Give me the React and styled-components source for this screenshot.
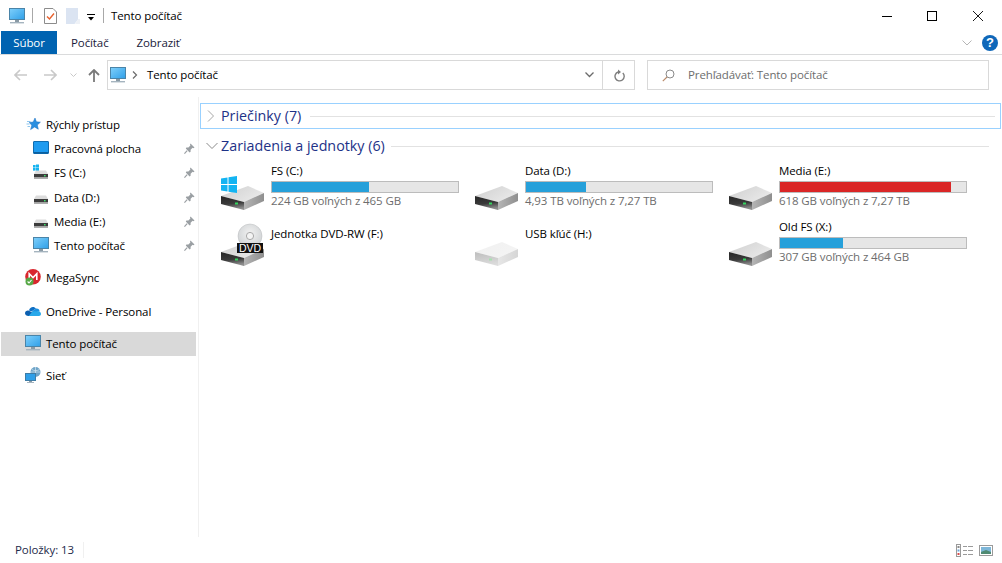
import styled, { createGlobalStyle } from "styled-components";

const GlobalStyle = createGlobalStyle`
  html, body, #root {
    margin: 0;
    height: 100%;
    background: #fff;
  }
  body {
    font-family: "Open Sans", "Noto Sans", sans-serif;
    font-size: 11.5px;
    letter-spacing: -0.1px;
    color: #000;
    overflow: hidden;
  }
`;

const quickAccess = [
  { label: "Pracovná plocha", icon: "desktop" },
  { label: "FS (C:)", icon: "sysdrive" },
  { label: "Data (D:)", icon: "drive", gap: 1 },
  { label: "Media (E:)", icon: "drive" },
  { label: "Tento počítač", icon: "pc" },
];

const drives = [
  { name: "FS (C:)", used: 52, info: "224 GB voľných z 465 GB", badge: "win" },
  { name: "Data (D:)", used: 32, info: "4,93 TB voľných z 7,27 TB" },
  { name: "Media (E:)", used: 92, info: "618 GB voľných z 7,27 TB", full: true },
  { name: "Jednotka DVD-RW (F:)", badge: "dvd" },
  { name: "USB kľúč (H:)", pale: true },
  { name: "Old FS (X:)", used: 34, info: "307 GB voľných z 464 GB" },
];

function PcIcon({ size = 16 }) {
  return (
    <svg width={size} height={size} viewBox="0 0 16 16">
      <defs>
        <linearGradient id="pcScreen" x1="0" y1="0" x2="1" y2="1">
          <stop offset="0" stopColor="#7fd0fb" />
          <stop offset="1" stopColor="#2f9fe8" />
        </linearGradient>
      </defs>
      <rect x="0.5" y="0.5" width="15" height="11" fill="url(#pcScreen)" stroke="#4a84a8" />
      <rect x="6" y="12" width="4" height="2" fill="#8a9aa5" />
      <rect x="1" y="14" width="14" height="1.4" fill="#a5b4bf" />
    </svg>
  );
}

function DesktopIcon() {
  return (
    <svg width="16" height="16" viewBox="0 0 16 16">
      <rect x="0.5" y="1.5" width="15" height="12" rx="0.5" fill="#1e9bf0" stroke="#0f6cb0" />
      <rect x="1" y="12" width="14" height="1.5" fill="#0b5f9e" />
    </svg>
  );
}

function SmallDrive({ windows }) {
  return (
    <svg width="16" height="16" viewBox="0 0 16 16">
      {windows && (
        <g fill="#17b4f0">
          <rect x="0" y="1" width="2.6" height="2.6" />
          <rect x="3" y="0.5" width="3" height="3.1" />
          <rect x="0" y="4" width="2.6" height="2.6" />
          <rect x="3" y="4" width="3" height="3" />
        </g>
      )}
      <path d="M1 10 L3 6.5 H13 L15 10 Z" fill="#dcdcdc" />
      <rect x="1" y="10" width="14" height="3.4" fill="#3c3c3c" />
      <rect x="1" y="13.4" width="14" height="1.4" fill="#9a9a9a" />
      <rect x="11" y="11" width="1.6" height="1.4" fill="#3ee06a" />
    </svg>
  );
}

function StarIcon() {
  return (
    <svg width="16" height="16" viewBox="0 0 16 16">
      <path d="M10 2 L11.4 5.8 L15.4 6.2 L12.3 9 L13.3 13.2 L9.6 11 L5.6 13.6 L6.8 9.2 L4.2 6.6 L8.2 6 Z" fill="#2a8fe0" stroke="#1a6fc0" strokeWidth="0.5" />
      <path d="M2 5.5 H5.5 M1.5 8 H4.5 M2.5 10.5 H5" stroke="#8fc7ef" strokeWidth="1" />
    </svg>
  );
}

function MegaIcon() {
  return (
    <svg width="16" height="17" viewBox="0 0 16 17">
      <circle cx="8" cy="7.8" r="7.8" fill="#d9272e" />
      <path d="M4.2 11 V4.8 L8 8.6 L11.8 4.8 V11" fill="none" stroke="#fff" strokeWidth="1.6" />
      <circle cx="4.5" cy="12.5" r="4" fill="#57a846" />
      <path d="M2.6 12.5 L4 14 L6.5 11" fill="none" stroke="#fff" strokeWidth="1.1" />
    </svg>
  );
}

function CloudIcon() {
  return (
    <svg width="16" height="16" viewBox="0 0 16 16">
      <path d="M4 7.5 C4.5 4 9 2.5 11 5.6 L6.5 8.5 Z" fill="#0f6fc4" />
      <path d="M11 5.6 C13 5.2 14.6 6.6 14.6 8.4 L8.5 9.5 L6.8 8.2 Z" fill="#1a8fe0" />
      <path d="M3.6 13 C1.4 13 0 11.8 0 10.2 C0 8.6 1.6 7.4 3.4 7.6 L9.5 10.5 L6.5 13 Z" fill="#0b5fb0" />
      <path d="M3.6 13 L7 9 C8.5 8 10.5 8.2 11.5 8.6 C13.5 7.8 16 8.8 16 11 C16 12.2 15 13 14 13 Z" fill="#28a8ea" />
    </svg>
  );
}

function NetworkIcon() {
  return (
    <svg width="16" height="16" viewBox="0 0 16 16">
      <circle cx="10.5" cy="5" r="5" fill="#6ea4c8" />
      <path d="M7 2.5 C9 4 12 4 14.5 2.5 M10.5 0 V10 M5.6 5 H15.4" stroke="#d8e8f2" strokeWidth="0.7" fill="none" />
      <rect x="0.5" y="6.5" width="10" height="7" fill="#2f9fe8" stroke="#3d7ca6" />
      <rect x="4" y="14" width="3" height="1" fill="#8a9aa5" />
      <rect x="2" y="15" width="7" height="1" fill="#a5b4bf" />
    </svg>
  );
}

function PinIcon() {
  return (
    <svg width="11" height="11" viewBox="0 0 11 11">
      <path d="M6.5 0.5 L10.5 4.5 L9.5 5.2 L8.6 4.8 L6.6 6.8 L6.6 8.8 L5.6 9.4 L1.8 5.6 L2.4 4.6 L4.4 4.6 L6.4 2.6 L6 1.6 Z" fill="#9a9fa3" />
      <path d="M3.2 7.6 L0.4 10.6" stroke="#9a9fa3" strokeWidth="1.2" />
    </svg>
  );
}

const sideIcons = {
  desktop: <DesktopIcon />,
  sysdrive: <SmallDrive windows />,
  drive: <SmallDrive />,
  pc: <PcIcon />,
};

function DriveIcon({ badge, pale }) {
  const id = pale ? "pale" : "solid";
  return (
    <svg width="48" height="48" viewBox="0 0 48 48">
      <defs>
        <linearGradient id={`${id}Top`} x1="0" y1="0" x2="1" y2="0.6">
          <stop offset="0" stopColor={pale ? "#f0f0f0" : "#cfcfcf"} />
          <stop offset="1" stopColor={pale ? "#f4f4f4" : "#e9e9e9"} />
        </linearGradient>
        <linearGradient id={`${id}Side`} x1="0" y1="0" x2="1" y2="0">
          <stop offset="0" stopColor={pale ? "#e6e6e6" : "#b5b5b5"} />
          <stop offset="1" stopColor={pale ? "#d6d6d6" : "#8f8f8f"} />
        </linearGradient>
        <linearGradient id={`${id}Front`} x1="0" y1="0" x2="0.2" y2="1">
          <stop offset="0" stopColor={pale ? "#bdbdbd" : "#262626"} />
          <stop offset="0.6" stopColor={pale ? "#cfcfcf" : "#3a3a3a"} />
          <stop offset="1" stopColor={pale ? "#dcdcdc" : "#8c8c8c"} />
        </linearGradient>
        <radialGradient id="discShine" cx="0.5" cy="0.4" r="0.6">
          <stop offset="0" stopColor="#f2f2f2" />
          <stop offset="1" stopColor="#cfd2d4" />
        </radialGradient>
      </defs>
      <path d="M1 32 L28 22 L44 29 L24 38 Z" fill={`url(#${id}Top)`} />
      <path d="M24 38 L44 29 L44 37 L24 46 Z" fill={`url(#${id}Side)`} />
      <path d="M1 32 L24 38 L24 46 L1 40 Z" fill={`url(#${id}Front)`} />
      <rect x="15" y="38.5" width="3" height="2" fill={pale ? "#a8e0b0" : "#35d45f"} />
      {badge === "win" && (
        <g fill="#13b4f2">
          <path d="M1 14.5 L7.5 13.5 V20 H1 Z" />
          <path d="M8.5 13.3 L17 12 V20 H8.5 Z" />
          <path d="M1 21 H7.5 V27.5 L1 26.5 Z" />
          <path d="M8.5 21 H17 V29 L8.5 27.7 Z" />
        </g>
      )}
      {badge === "dvd" && (
        <g>
          <circle cx="30" cy="16" r="12" fill="url(#discShine)" stroke="#b8babc" strokeWidth="0.5" />
          <circle cx="30" cy="16" r="3.6" fill="#f4f4f4" stroke="#a8a8a8" />
          <rect x="17" y="23" width="26" height="10" fill="#111" />
          <text x="30" y="31.8" textAnchor="middle" fontSize="10.5" fill="#fff" fontFamily="Liberation Sans, sans-serif">DVD</text>
        </g>
      )}
    </svg>
  );
}

function App() {
  return (
    <Window>
      <GlobalStyle />
      <TitleBar>
        <QuickTools>
          <PcIcon />
          <ToolSep />
          <svg width="13" height="16" viewBox="0 0 13 16">
            <path d="M0.5 0.5 H9 L12.5 4 V15.5 H0.5 Z" fill="#fff" stroke="#8c8c8c" />
            <path d="M3 8.5 L5.5 11 L10 5.5" fill="none" stroke="#e8602c" strokeWidth="1.4" />
          </svg>
          <svg width="14" height="16" viewBox="0 0 14 16">
            <path d="M0 0 H12 V11.5 L8.5 16 H0 Z" fill="#dbe4f2" />
            <path d="M12 11 H14 V16 H9 Z" fill="#eef1f6" />
          </svg>
          <svg width="8" height="7" viewBox="0 0 8 7">
            <rect width="8" height="1" fill="#000" />
            <path d="M1 3 H7 L4 6.5 Z" fill="#000" />
          </svg>
          <ToolSep />
        </QuickTools>
        <WindowTitle>Tento počítač</WindowTitle>
        <WindowControls>
          <WindowButton>
            <svg width="10" height="10" viewBox="0 0 10 10"><path d="M0 5.5 H10" stroke="#000" /></svg>
          </WindowButton>
          <WindowButton>
            <svg width="10" height="10" viewBox="0 0 10 10"><rect x="0.5" y="0.5" width="9" height="9" fill="none" stroke="#000" /></svg>
          </WindowButton>
          <WindowButton>
            <svg width="10" height="10" viewBox="0 0 10 10"><path d="M0 0 L10 10 M10 0 L0 10" stroke="#000" strokeWidth="0.9" /></svg>
          </WindowButton>
        </WindowControls>
      </TitleBar>

      <TabBar>
        <FileTab>Súbor</FileTab>
        <Tab>Počítač</Tab>
        <Tab>Zobraziť</Tab>
        <RibbonTools>
          <svg width="10" height="6" viewBox="0 0 10 6"><path d="M0.5 0.5 L5 5 L9.5 0.5" fill="none" stroke="#b5b5b5" /></svg>
          <HelpBadge>?</HelpBadge>
        </RibbonTools>
      </TabBar>

      <NavBar>
        <NavArrows>
          <svg width="13" height="12" viewBox="0 0 13 12"><path d="M6 1 L1 6 L6 11 M1 6 H13" fill="none" stroke="#c9c9c9" strokeWidth="1.6" /></svg>
          <svg width="13" height="12" viewBox="0 0 13 12"><path d="M7 1 L12 6 L7 11 M12 6 H0" fill="none" stroke="#c9c9c9" strokeWidth="1.6" /></svg>
          <svg width="7" height="5" viewBox="0 0 7 5"><path d="M0.5 0.5 L3.5 3.5 L6.5 0.5" fill="none" stroke="#c9c9c9" /></svg>
          <svg width="12" height="13" viewBox="0 0 12 13"><path d="M1 6 L6 1 L11 6 M6 1 V13" fill="none" stroke="#7a7a7a" strokeWidth="1.8" /></svg>
        </NavArrows>
        <AddressBox>
          <PcIcon />
          <svg width="6" height="8" viewBox="0 0 6 8"><path d="M1 0.5 L4.5 4 L1 7.5" fill="none" stroke="#6b6b6b" strokeWidth="1.2" /></svg>
          <AddressText>Tento počítač</AddressText>
          <AddressButton>
            <svg width="9" height="6" viewBox="0 0 9 6"><path d="M0.5 0.5 L4.5 4.5 L8.5 0.5" fill="none" stroke="#6b6b6b" strokeWidth="1.3" /></svg>
          </AddressButton>
          <RefreshButton>
            <svg width="12" height="13" viewBox="0 0 12 13">
              <path d="M9.8 4 A4.6 4.6 0 1 1 5 3" fill="none" stroke="#7d7d7d" strokeWidth="1.4" />
              <path d="M5 0.5 L8 3 L5 5.5 Z" fill="#7d7d7d" />
            </svg>
          </RefreshButton>
        </AddressBox>
        <SearchBox>
          <svg width="13" height="13" viewBox="0 0 13 13">
            <circle cx="8" cy="5" r="4" fill="none" stroke="#8a8a8a" />
            <path d="M5 8 L0.8 12.2" stroke="#b98a6a" strokeWidth="1.1" />
          </svg>
          <SearchText>Prehľadávať: Tento počítač</SearchText>
        </SearchBox>
      </NavBar>

      <Body>
        <Sidebar>
          <NavRow>
            <StarIcon />
            <span>Rýchly prístup</span>
          </NavRow>
          {quickAccess.map((item) => (
            <NavRow key={item.label} $nested $gap={item.gap}>
              {sideIcons[item.icon]}
              <span>{item.label}</span>
              <PinSlot><PinIcon /></PinSlot>
            </NavRow>
          ))}
          <NavRow $gap={8}>
            <MegaIcon />
            <span>MegaSync</span>
          </NavRow>
          <NavRow $gap={10}>
            <CloudIcon />
            <span>OneDrive - Personal</span>
          </NavRow>
          <NavRow $gap={9} $selected>
            <PcIcon />
            <span>Tento počítač</span>
          </NavRow>
          <NavRow $gap={7}>
            <NetworkIcon />
            <span>Sieť</span>
          </NavRow>
        </Sidebar>

        <Content>
          <GroupHeader $focused>
            <svg width="8" height="12" viewBox="0 0 8 12"><path d="M1 0.5 L6.5 6 L1 11.5" fill="none" stroke="#a6a6a6" /></svg>
            <GroupTitle>Priečinky (7)</GroupTitle>
            <GroupLine />
          </GroupHeader>
          <GroupHeader>
            <svg width="12" height="8" viewBox="0 0 12 8"><path d="M0.5 1 L6 6.5 L11.5 1" fill="none" stroke="#8a8a8a" /></svg>
            <GroupTitle>Zariadenia a jednotky (6)</GroupTitle>
            <GroupLine />
          </GroupHeader>
          <DriveGrid>
            {drives.map((drive) => (
              <DriveTile key={drive.name}>
                <DriveIcon badge={drive.badge} pale={drive.pale} />
                <DriveText $single={!drive.info}>
                  <DriveName>{drive.name}</DriveName>
                  {drive.info && (
                    <>
                      <UsageBar>
                        <UsageFill $full={drive.full} style={{ width: `${drive.used}%` }} />
                      </UsageBar>
                      <DriveInfo>{drive.info}</DriveInfo>
                    </>
                  )}
                </DriveText>
              </DriveTile>
            ))}
          </DriveGrid>
        </Content>
      </Body>

      <StatusBar>
        <ItemCount>Položky: 13</ItemCount>
        <ViewSwitch>
          <svg width="17" height="13" viewBox="0 0 17 13">
            <rect x="0.5" y="0.5" width="4" height="12" fill="#fff" stroke="#9a9a9a" />
            <rect x="1.5" y="2" width="2" height="2" fill="#8a8a8a" />
            <rect x="1.5" y="5.5" width="2" height="2" fill="#6aa5d8" />
            <rect x="1.5" y="9" width="2" height="2" fill="#d84a4a" />
            <path d="M7 2.5 H11 M12 2.5 H17 M7 6.5 H11 M12 6.5 H17 M7 10.5 H11 M12 10.5 H17" stroke="#9a9a9a" />
          </svg>
          <svg width="14" height="11" viewBox="0 0 14 11">
            <rect x="0.5" y="0.5" width="13" height="10" fill="#fff" stroke="#9a9a9a" />
            <rect x="2" y="2" width="10" height="7" fill="#7db6d8" />
            <path d="M2 7 L7 5 L12 7 V9 H2 Z" fill="#4f8a72" />
          </svg>
        </ViewSwitch>
      </StatusBar>
    </Window>
  );
}

const Window = styled.div`
  height: 100%;
  display: flex;
  flex-direction: column;
`;

const TitleBar = styled.div`
  height: 31px;
  display: flex;
  align-items: center;
  padding-left: 9px;
`;

const QuickTools = styled.div`
  display: flex;
  align-items: center;

  & > :nth-child(2) {
    margin-left: 7px;
  }
  & > :nth-child(3) {
    margin-left: 11px;
  }
  & > :nth-child(4) {
    margin-left: 9px;
  }
  & > :nth-child(5) {
    margin: 3px 0 0 7px;
  }
  & > :nth-child(6) {
    margin-left: 8px;
  }
`;

const ToolSep = styled.div`
  width: 1px;
  height: 15px;
  background: #a8a8a8;
`;

const WindowTitle = styled.div`
  margin-left: 7px;
`;

const WindowControls = styled.div`
  margin-left: auto;
  padding-right: 1px;
  display: flex;
`;

const WindowButton = styled.div`
  width: 46px;
  height: 31px;
  display: flex;
  align-items: center;
  justify-content: center;

  &:first-child {
    margin-right: -1px;
  }
`;

const TabBar = styled.div`
  height: 23px;
  display: flex;
  align-items: stretch;
  padding-left: 1px;
  border-bottom: 1px solid #dadbdc;
`;

const FileTab = styled.div`
  width: 56px;
  display: flex;
  align-items: center;
  justify-content: center;
  background: #0063b1;
  color: #fff;
`;

const Tab = styled.div`
  padding: 0 14px;
  display: flex;
  align-items: center;
  color: #1a1a3a;
`;

const RibbonTools = styled.div`
  margin-left: auto;
  padding-right: 4px;
  display: flex;
  align-items: center;
  gap: 10px;
`;

const HelpBadge = styled.div`
  width: 16px;
  height: 16px;
  border-radius: 50%;
  background: #0f67b9;
  color: #fff;
  font: bold 13px/16px "Liberation Sans", sans-serif;
  text-align: center;
`;

const NavBar = styled.div`
  height: 42px;
  box-sizing: border-box;
  padding: 5px 13px 7px 0;
  display: flex;
  align-items: stretch;
`;

const NavArrows = styled.div`
  width: 107px;
  padding-left: 14px;
  box-sizing: border-box;
  display: flex;
  align-items: center;

  & > svg:nth-child(2) {
    margin-left: 17px;
  }
  & > svg:nth-child(3) {
    margin-left: 13px;
  }
  & > svg:nth-child(4) {
    margin-left: 11px;
  }
`;

const AddressBox = styled.div`
  width: 528px;
  box-sizing: border-box;
  display: flex;
  align-items: center;
  padding-left: 2px;
  border: 1px solid #d9d9d9;

  & > svg:nth-child(2) {
    margin-left: 6px;
  }
`;

const AddressText = styled.div`
  margin: 0 0 2px 9px;
  flex: 1;
`;

const AddressButton = styled.div`
  width: 29px;
  height: 100%;
  box-sizing: border-box;
  padding-left: 3px;
  display: flex;
  align-items: center;
  justify-content: center;
  border-right: 1px solid #d9d9d9;
`;

const RefreshButton = styled.div`
  width: 30px;
  padding-left: 1px;
  display: flex;
  justify-content: center;
`;

const SearchBox = styled.div`
  margin-left: 12px;
  flex: 1;
  display: flex;
  align-items: center;
  gap: 13px;
  padding-left: 14px;
  border: 1px solid #d9d9d9;
`;

const SearchText = styled.div`
  margin-bottom: 2px;
  color: #6d6d6d;
`;

const Body = styled.div`
  flex: 1;
  min-height: 0;
  display: flex;
`;

const Sidebar = styled.nav`
  width: 199px;
  box-sizing: border-box;
  padding: 15px 0 0 1px;
  border-right: 1px solid #f0f0f0;
`;

const NavRow = styled.div`
  width: 195px;
  height: 24px;
  box-sizing: border-box;
  margin-top: ${(props) => props.$gap || 0}px;
  padding-left: ${(props) => (props.$nested ? 32 : 24)}px;
  padding-bottom: ${(props) => (props.$selected ? 2 : 0)}px;
  display: flex;
  align-items: center;
  gap: 5px;
  background: ${(props) => (props.$selected ? "#d9d9d9" : "transparent")};
`;

const PinSlot = styled.div`
  margin-left: auto;
  padding-right: 1px;
  display: flex;
`;

const Content = styled.main`
  flex: 1;
  min-width: 0;
  padding: 6px 1px 0 1px;
`;

const GroupHeader = styled.div`
  height: 26px;
  box-sizing: border-box;
  margin-bottom: 4px;
  padding: 0 ${(props) => (props.$focused ? 5 : 11)}px 0 ${(props) => (props.$focused ? 6 : 5)}px;
  display: flex;
  align-items: center;
  gap: ${(props) => (props.$focused ? 6 : 3)}px;
  border: 1px solid ${(props) => (props.$focused ? "#99d1ff" : "transparent")};
`;

const GroupTitle = styled.div`
  margin-bottom: 2px;
  font-size: 14.3px;
  letter-spacing: 0;
  color: #1e3287;
  white-space: nowrap;
`;

const GroupLine = styled.div`
  flex: 1;
  height: 1px;
  margin-left: 3px;
  background: #e2e2e2;
`;

const DriveGrid = styled.div`
  display: grid;
  grid-template-columns: repeat(3, 254px);
  grid-auto-rows: 56px;
  padding-left: 20px;
`;

const DriveTile = styled.div`
  display: flex;
  gap: 3px;
  align-items: flex-start;

  & > svg {
    margin-top: 1px;
    flex: none;
  }
`;

const DriveText = styled.div`
  width: 188px;
  padding-top: ${(props) => (props.$single ? 7 : 0)}px;
`;

const DriveName = styled.div`
  height: 16px;
  line-height: 16px;
  white-space: nowrap;
`;

const UsageBar = styled.div`
  height: 12px;
  box-sizing: border-box;
  margin-top: 2px;
  border: 1px solid #bcbcbc;
  background: #e6e6e6;
`;

const UsageFill = styled.div`
  height: 100%;
  background: ${(props) => (props.$full ? "#da2626" : "#26a0da")};
`;

const DriveInfo = styled.div`
  margin-top: 0;
  line-height: 16px;
  color: #6d6d6d;
  white-space: nowrap;
`;

const StatusBar = styled.div`
  height: 26px;
  display: flex;
  align-items: center;
  padding: 0 9px 0 15px;
`;

const ItemCount = styled.div`
  padding-right: 9px;
  line-height: 16px;
  color: #1e2a4a;
  border-right: 1px solid #f0f0f0;
`;

const ViewSwitch = styled.div`
  margin-left: auto;
  display: flex;
  align-items: center;
  gap: 6px;
`;

export default App;
